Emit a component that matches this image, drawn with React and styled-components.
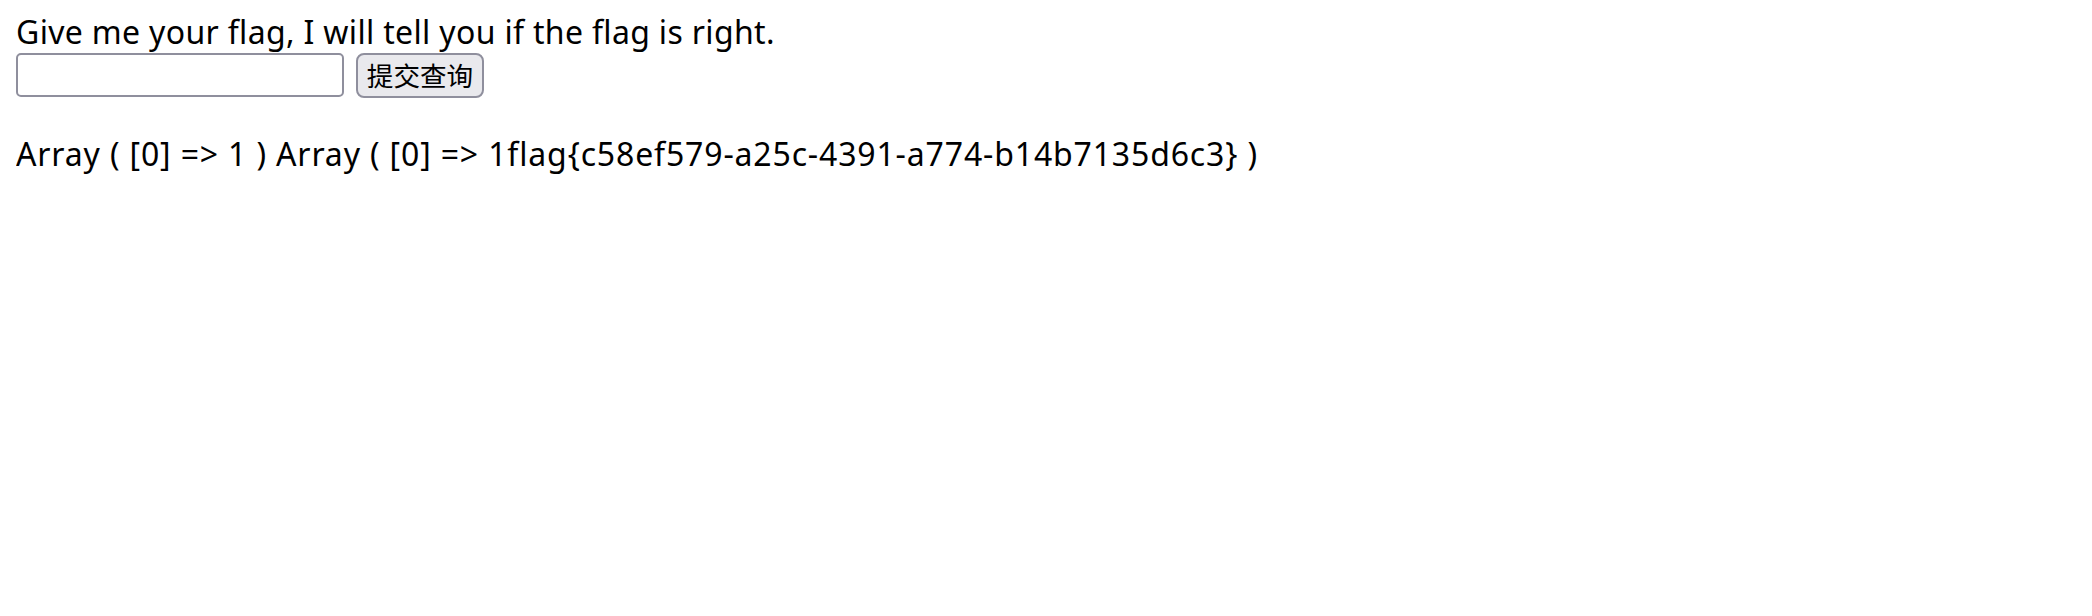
import styled, { createGlobalStyle } from "styled-components";

const GlobalStyle = createGlobalStyle`
  body {
    margin: 17px 16px 16px;
    background: #ffffff;
    color: #000000;
    font-family: "Noto Sans", "Noto Sans CJK SC", sans-serif;
  }
`;

const Page = styled.div`
  display: flex;
  flex-direction: column;
  align-items: flex-start;
`;

const Line = styled.div`
  font-size: 32px;
  line-height: 30px;
  padding-bottom: 10px;
  white-space: nowrap;
  letter-spacing: ${(props) => props.spacing || "0px"};
  margin-top: ${(props) => props.gap || "0px"};
`;

const Form = styled.form`
  display: flex;
  align-items: flex-start;
  gap: 12px;
  margin-top: -4px;
`;

const Input = styled.input`
  box-sizing: border-box;
  width: 328px;
  height: 44px;
  border: 2px solid #8f8f9d;
  border-radius: 5px;
  background: #ffffff;
  padding: 0 6px;
  font-size: 26px;
  outline: none;
`;

const Button = styled.button`
  box-sizing: border-box;
  width: 128px;
  height: 45px;
  border: 2px solid #8f8f9d;
  border-radius: 8px;
  background: #e9e9ed;
  color: #000000;
  padding: 0;
  font-family: "Noto Sans CJK SC", sans-serif;
  font-size: 26.6px;
  line-height: 1;
  cursor: pointer;
`;

export default function App() {
  return (
    <>
      <GlobalStyle />
      <Page>
        <Line spacing="0.33px">Give me your flag, I will tell you if the flag is right.</Line>
        <Form onSubmit={(e) => e.preventDefault()}>
          <Input type="text" name="flag" />
          <Button type="submit">提交查询</Button>
        </Form>
        <Line gap="41px" spacing="0.85px">
          Array ( [0] =&gt; 1 ) Array ( [0] =&gt; 1flag{"{"}c58ef579-a25c-4391-a774-b14b7135d6c3{"}"} )
        </Line>
      </Page>
    </>
  );
}
